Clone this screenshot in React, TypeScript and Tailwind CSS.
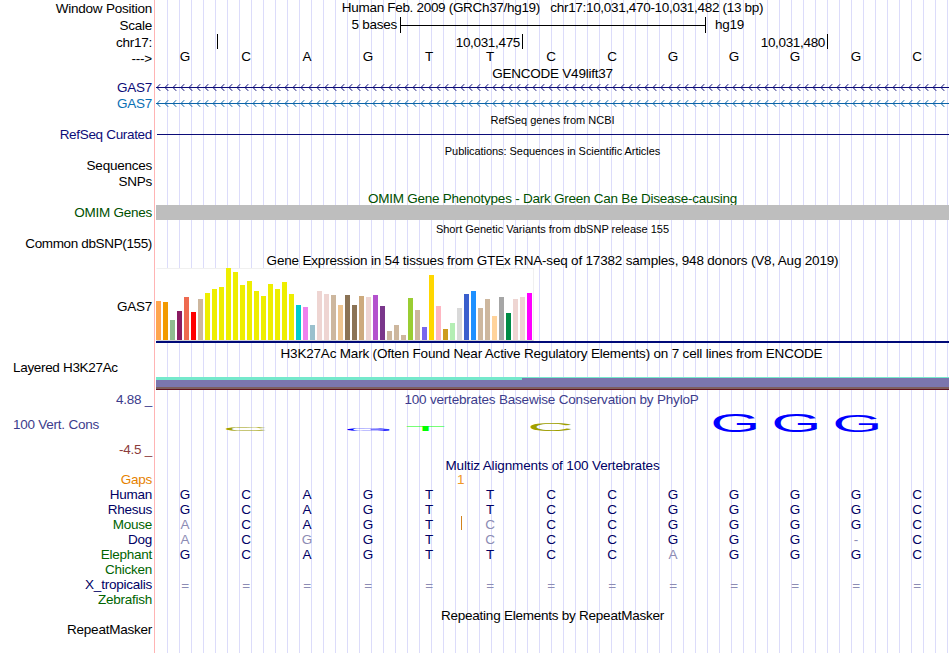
import React from 'react';

const BASES = ['G', 'C', 'A', 'G', 'T', 'T', 'C', 'C', 'G', 'G', 'G', 'G', 'C'];

// [height, color] for each GTEx tissue
const TISSUES: [number, string][] = [
  [39, '#ffa54f'], [38, '#f29a00'], [20, '#8fbc8f'], [29, '#8b1c62'], [43, '#ee6a50'],
  [28, '#ff0000'], [41, '#cdb79e'], [47, '#eeee00'], [51, '#eeee00'], [53, '#eeee00'],
  [72, '#eeee00'], [68, '#eeee00'], [55, '#eeee00'], [59, '#eeee00'], [49, '#eeee00'],
  [44, '#eeee00'], [56, '#eeee00'], [51, '#eeee00'], [58, '#eeee00'], [46, '#eeee00'],
  [35, '#00cdcd'], [33, '#ee82ee'], [15, '#9ac0cd'], [49, '#eed5d2'], [46, '#eed5d2'],
  [45, '#cdb79e'], [35, '#eec591'], [45, '#8b7355'], [35, '#8b7355'], [44, '#cdaa7d'],
  [43, '#eed5d2'], [45, '#b452cd'], [34, '#7a378b'], [9, '#cdb79e'], [15, '#cdb79e'],
  [5, '#cdb79e'], [42, '#9acd32'], [30, '#cdb79e'], [13, '#7a67ee'], [65, '#ffd700'],
  [34, '#ffb6c1'], [11, '#cd9b1d'], [17, '#b4eeb4'], [32, '#d9d9d9'], [46, '#3a5fcd'],
  [49, '#1e90ff'], [32, '#cdb79e'], [41, '#cdb79e'], [24, '#ffd39b'], [43, '#a6a6a6'],
  [27, '#008b45'], [41, '#eed5d2'], [43, '#eed5d2'], [47, '#ff00ff'],
];

interface Species {
  name: string;
  color: string;
  seq: string;
  faded: number[];
}

const SPECIES: Species[] = [
  { name: 'Human', color: 'text-[#000064]', seq: 'GCAGTTCCGGGGC', faded: [] },
  { name: 'Rhesus', color: 'text-[#000064]', seq: 'GCAGTTCCGGGGC', faded: [] },
  { name: 'Mouse', color: 'text-[#006400]', seq: 'ACAGTCCCGGGGC', faded: [0, 5] },
  { name: 'Dog', color: 'text-[#000064]', seq: 'ACGGTCCCGGG-C', faded: [0, 2, 5, 11] },
  { name: 'Elephant', color: 'text-[#006400]', seq: 'GCAGTTCCAGGGC', faded: [8] },
  { name: 'Chicken', color: 'text-[#006400]', seq: '', faded: [] },
  { name: 'X_tropicalis', color: 'text-[#000064]', seq: '=============', faded: [0, 1, 2, 3, 4, 5, 6, 7, 8, 9, 10, 11, 12] },
  { name: 'Zebrafish', color: 'text-[#006400]', seq: '', faded: [] },
];

// Ink box of each letter at font-size 100: left, width, top above baseline, height
const INK: Record<string, [number, number, number, number]> = {
  G: [5, 66.5, 70, 71],
  C: [5, 63.5, 70, 71],
  T: [2, 56.5, 69, 69],
};

const LOGOS = [
  { letter: 'C', x: 70, y: 20, w: 40, h: 4, color: '#a0a000' },
  { letter: 'G', x: 191, y: 21, w: 43, h: 3, color: '#0000ff' },
  { letter: 'T', x: 250.5, y: 19, w: 37.5, h: 5, color: '#00ff00' },
  { letter: 'C', x: 374.5, y: 16, w: 41, h: 8, color: '#a0a000' },
  { letter: 'G', x: 557.5, y: 6.5, w: 43, h: 18.5, color: '#0000ff' },
  { letter: 'G', x: 618.5, y: 6.5, w: 43, h: 18.5, color: '#0000ff' },
  { letter: 'G', x: 679.5, y: 8.5, w: 43, h: 16.5, color: '#0000ff' },
];

interface RowProps {
  h: string;
  label?: React.ReactNode;
  labelClass?: string;
  className?: string;
  children?: React.ReactNode;
}

const Row: React.FC<RowProps> = ({ h, label, labelClass = '', className = '', children }) => (
  <div className={`flex shrink-0 ${h}`}>
    <div className={`flex w-[155px] shrink-0 items-center justify-end border-r border-[#ffb4b4] bg-white pr-0.5 ${labelClass}`}>
      {label}
    </div>
    <div className="w-px shrink-0 bg-white" />
    <div className={`flex min-w-0 flex-1 ${className}`}>{children}</div>
  </div>
);

const Title: React.FC<RowProps> = ({ className = '', children, ...rest }) => (
  <Row {...rest} className={`items-center justify-center ${className}`}>
    {children}
  </Row>
);

const Arrows: React.FC<{ color: string }> = ({ color }) => (
  <svg width="793" height="16" className="block">
    <path d="M0 7.5H793" stroke={color} />
    {Array.from({ length: 99 }, (_, i) => (
      <path
        key={i}
        d={`M${i * 8 + 4.2} 4.2L${i * 8 + 1} 7.5L${i * 8 + 4.2} 10.8`}
        stroke={color}
        strokeWidth="1"
        fill="none"
      />
    ))}
  </svg>
);

const App: React.FC = () => {
  return (
    <div className="h-[653px] w-[950px] overflow-hidden bg-white">
      <div className="flex h-full w-[949px] flex-col whitespace-pre bg-[linear-gradient(90deg,#dcdcfa_1px,transparent_1px)] bg-[length:12px_100%] bg-[position:11px_0] font-['Liberation_Sans',Arial,sans-serif] text-[13.5px] leading-[15px] tracking-[-0.24px] text-black">
        {/* Ruler */}
        <Title h="h-[17px]" label="Window Position" labelClass="pb-px" className="pb-0.5 tracking-[-0.31px]">
          {'Human Feb. 2009 (GRCh37/hg19)   chr17:10,031,470-10,031,482 (13 bp)'}
        </Title>
        <Row h="h-[17px]" label="Scale">
          <div className="w-[241px] text-right">5 bases</div>
          <div className="ml-[3px] flex h-4 w-[306px] items-center border-x border-black">
            <div className="h-px w-full bg-black" />
          </div>
          <div className="ml-[9px]">hg19</div>
        </Row>
        <Row h="h-4" label="chr17:">
          <div className="h-[15px] w-[62px] border-r border-black" />
          <div className="flex h-[15px] w-[305px] justify-end border-r border-black pr-0.5 pt-px tracking-[-0.33px]">10,031,475</div>
          <div className="flex h-[15px] w-[305px] justify-end border-r border-black pr-0.5 pt-px tracking-[-0.33px]">10,031,480</div>
        </Row>
        <Row h="h-[15px]" label="--->" labelClass="pt-px">
          {BASES.map((b, i) => (
            <div key={i} className="-mt-px w-[61px] pr-[3px] text-center">{b}</div>
          ))}
        </Row>

        {/* Gene tracks */}
        <Title h="h-[15px]" className="pt-px">GENCODE V49lift37</Title>
        <Row h="h-4" label="GAS7" labelClass="pb-px text-[#0c0c78]">
          <Arrows color="#0c0c78" />
        </Row>
        <Row h="h-4" label="GAS7" labelClass="pb-px text-[#0a70b4]">
          <Arrows color="#0a64a8" />
        </Row>
        <Title h="h-[15px]" className="pt-px text-[11px] tracking-normal">RefSeq genes from NCBI</Title>
        <Row h="h-4" label="RefSeq Curated" labelClass="pb-px text-[#0c0c78] tracking-[-0.32px]">
          <div className="ml-px mt-[7px] h-px w-full bg-[#0c0c78]" />
        </Row>
        <Title h="h-[15px]" className="pt-px text-[11px] tracking-[-0.05px]">Publications: Sequences in Scientific Articles</Title>
        <Row h="h-4" label="Sequences" labelClass="pb-px" />
        <Row h="h-4" label="SNPs" labelClass="pb-px" />
        <Title h="h-[15px]" className="pt-px text-[#005000]">OMIM Gene Phenotypes - Dark Green Can Be Disease-causing</Title>
        <Row h="h-[15px]" label="OMIM Genes" labelClass="text-[#005000]" className="bg-[#bebebe]" />
        <Title h="h-4" className="pt-[3px] text-[11px] tracking-normal">Short Genetic Variants from dbSNP release 155</Title>
        <Row h="h-4" label="Common dbSNP(155)" labelClass="pb-px tracking-[-0.36px]" />

        {/* GTEx expression */}
        <Title h="h-4" className="tracking-[-0.19px]">Gene Expression in 54 tissues from GTEx RNA-seq of 17382 samples, 948 donors (V8, Aug 2019)</Title>
        <Row h="h-[78px]" label="GAS7" labelClass="pb-0.5" className="flex-col">
          <div className="flex h-[73px] w-[378px] items-end gap-0.5 border border-b-[#d2d2d2] border-l-transparent border-r-[#f0f0f0] border-t-[#f0f0f0] bg-white">
            {TISSUES.map(([height, color], i) => (
              <div key={i} className="-ml-px mr-px w-[5px] shrink-0" style={{ height, backgroundColor: color }} />
            ))}
          </div>
          <div className="h-0.5 w-full bg-[#000a78]" />
        </Row>

        {/* H3K27Ac */}
        <Title h="h-[15px]" className="pr-0.5 tracking-[-0.19px]">H3K27Ac Mark (Often Found Near Active Regulatory Elements) on 7 cell lines from ENCODE</Title>
        <Row h="h-[30px]" label="Layered H3K27Ac" labelClass="justify-start pl-[13px] pb-[18px] tracking-[-0.32px]" className="flex-col pt-4">
          <div className="flex h-[3px] bg-[#7b76ae]">
            <div className="h-full w-[366px] bg-[#75e9cc]" />
            <div className="h-px flex-1 bg-[#75e9cc]" />
          </div>
          <div className="h-[7px] bg-[#7b76ae]" />
          <div className="h-0.5 bg-[#7d5f5f]" />
          <div className="h-px bg-[#601422]" />
        </Row>

        {/* Conservation */}
        <Title h="h-4" label="4.88 _" labelClass="pt-px text-[#3c3c8c]" className="pr-0.5 tracking-[-0.19px] text-[#3c3c8c]">
          100 vertebrates Basewise Conservation by PhyloP
        </Title>
        <Row
          h="h-[51px]"
          labelClass="flex-col"
          label={
            <>
              <span className="mt-[5px] self-start pl-[13px] text-[#3c3c8c]">100 Vert. Cons</span>
              <span className="mt-2.5 self-end pb-px text-[#8c3c3c]">-4.5 _</span>
            </>
          }
        >
          <svg width="793" height="51" className="block tracking-normal" fontFamily="Liberation Sans" fontSize="100">
            {LOGOS.map(({ letter, x, y, w, h, color }, i) => {
              const [left, width, top, height] = INK[letter];
              const sx = w / width;
              const sy = h / height;
              return (
                <text key={i} fill={color} transform={`translate(${x - left * sx} ${y + top * sy}) scale(${sx} ${sy})`}>
                  {letter}
                </text>
              );
            })}
          </svg>
        </Row>

        {/* Multiz alignment */}
        <Title h="h-[15px]" className="tracking-[-0.14px] text-[#000064]">Multiz Alignments of 100 Vertebrates</Title>
        <Row h="h-[14px]" label="Gaps" labelClass="pb-0.5 text-[#e68200]" className="items-center pb-0.5 pl-[301px] text-[#f09628]">1</Row>
        {SPECIES.map((s) => (
          <Row key={s.name} h="h-[15px]" label={s.name} labelClass={s.color} className="relative">
            {s.seq.split('').map((b, i) => (
              <div
                key={i}
                className={`w-[61px] pr-[3px] text-center ${b === '=' ? 'pt-px' : ''} ${s.faded.includes(i) ? 'text-[#8c8cb4]' : 'text-[#000064]'}`}
              >
                {b}
              </div>
            ))}
            {s.name === 'Mouse' && <div className="absolute -top-px left-[305px] h-[14px] w-px bg-[#d2821e]" />}
          </Row>
        ))}

        <Title h="h-[15px]" className="pt-0.5">Repeating Elements by RepeatMasker</Title>
        <Row h="h-[31px]" label="RepeatMasker" labelClass="pb-[17px]" />
      </div>
    </div>
  );
};

export default App;
